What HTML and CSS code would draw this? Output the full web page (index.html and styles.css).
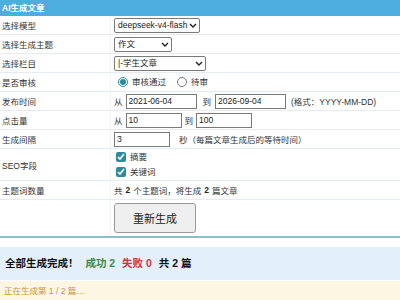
FILE: index.html
```html
<!DOCTYPE html>
<html lang="zh-CN">
<head>
<meta charset="UTF-8">
<meta name="viewport" content="width=device-width, initial-scale=1.0">
<title>AI生成文章</title>
<link rel="stylesheet" href="styles.css">
</head>
<body>
    <div class="panel">
        <div class="panel-title">AI生成文章</div>
        <div class="form-table">
            <div class="row">
                <div class="label">选择模型</div>
                <div class="value">
                    <span class="select-wrap">
                        <select class="sel-model"><option>deepseek-v4-flash</option></select>
                        <svg class="chev" width="8" height="5" viewBox="0 0 8 5"><path d="M1 1l3 3 3-3" fill="none" stroke="#222" stroke-width="1.4"/></svg>
                    </span>
                </div>
            </div>
            <div class="row">
                <div class="label">选择生成主题</div>
                <div class="value">
                    <span class="select-wrap">
                        <select class="sel-topic"><option>作文</option></select>
                        <svg class="chev" width="8" height="5" viewBox="0 0 8 5"><path d="M1 1l3 3 3-3" fill="none" stroke="#222" stroke-width="1.4"/></svg>
                    </span>
                </div>
            </div>
            <div class="row">
                <div class="label">选择栏目</div>
                <div class="value">
                    <span class="select-wrap">
                        <select class="sel-column"><option>|-学生文章</option></select>
                        <svg class="chev" width="8" height="5" viewBox="0 0 8 5"><path d="M1 1l3 3 3-3" fill="none" stroke="#222" stroke-width="1.4"/></svg>
                    </span>
                </div>
            </div>
            <div class="row">
                <div class="label">是否审核</div>
                <div class="value">
                    <label class="opt"><input type="radio" name="check" checked> 审核通过</label>
                    <label class="opt"><input type="radio" name="check"> 待审</label>
                </div>
            </div>
            <div class="row">
                <div class="label">发布时间</div>
                <div class="value">
                    <span>从</span>
                    <input type="text" class="txt-date" value="2021-06-04">
                    <span class="word">到</span>
                    <input type="text" class="txt-date" value="2026-09-04">
                    <span class="hint">(格式：YYYY-MM-DD)</span>
                </div>
            </div>
            <div class="row">
                <div class="label">点击量</div>
                <div class="value">
                    <span>从</span>
                    <input type="text" class="txt-num" value="10">
                    <span>到</span>
                    <input type="text" class="txt-num" value="100">
                </div>
            </div>
            <div class="row">
                <div class="label">生成间隔</div>
                <div class="value">
                    <input type="text" class="txt-num" value="3">
                    <span class="hint gap">秒（每篇文章生成后的等待时间）</span>
                </div>
            </div>
            <div class="row row-seo">
                <div class="label">SEO字段</div>
                <div class="value value-col">
                    <label class="opt"><input type="checkbox" checked> 摘要</label>
                    <label class="opt"><input type="checkbox" checked> 关键词</label>
                </div>
            </div>
            <div class="row">
                <div class="label">主题词数量</div>
                <div class="value">
                    共 <b>2</b> 个主题词，将生成 <b>2</b> 篇文章
                </div>
            </div>
            <div class="row row-btn">
                <div class="label"></div>
                <div class="value">
                    <button type="button" class="btn">重新生成</button>
                </div>
            </div>
        </div>
    </div>

    <div class="status-done">
        全部生成完成！ <span class="ok">成功 2</span> <span class="fail">失败 0</span> 共 2 篇
    </div>
    <div class="status-progress">正在生成第 1 / 2 篇…</div>
</body>
</html>
```

FILE: styles.css
```css
body {
    margin: 0;
    padding: 0;
    font-family: "Liberation Sans", "Noto Sans CJK SC", sans-serif;
    font-size: 8.5px;
    color: #333;
    background-color: #ffffff;
}
.panel {
    border-bottom: 2px solid #8fbccb;
}
.panel-title {
    height: 16px;
    line-height: 16px;
    padding-left: 2px;
    background-color: #4caddf;
    color: #ffffff;
    font-weight: bold;
}
.row {
    display: flex;
    height: 18px;
    border-bottom: 1px solid #e4ecef;
}
.row-seo {
    height: 31px;
}
.row-btn {
    height: 36px;
    border-bottom: none;
}
.label {
    width: 108px;
    padding-left: 2px;
    display: flex;
    align-items: center;
    border-right: 1px solid #f2f4f5;
}
.value {
    flex: 1;
    display: flex;
    align-items: center;
    padding-left: 3px;
    gap: 3px;
}
.value-col {
    flex-direction: column;
    align-items: flex-start;
    justify-content: center;
    gap: 3px;
    padding-left: 5px;
}
b {
    color: #222;
}
select, input[type="text"] {
    font-family: inherit;
    font-size: 8.5px;
    color: #222;
    height: 15px;
    box-sizing: border-box;
    border: 1px solid #7a7a7a;
    background-color: #ffffff;
    padding: 0 2px;
    margin: 0;
}
.select-wrap {
    position: relative;
    display: inline-flex;
}
select {
    appearance: none;
    -webkit-appearance: none;
    border-radius: 2px;
    padding: 0 11px 0 3px;
}
.chev {
    position: absolute;
    right: 3px;
    top: 5px;
    pointer-events: none;
}
.sel-model {
    width: 86px;
}
.sel-topic {
    width: 58px;
}
.sel-column {
    width: 92px;
}
.txt-date {
    width: 71px;
}
.txt-num {
    width: 56px;
}
.word {
    margin-left: 3px;
    margin-right: 1px;
}
.hint {
    margin-left: 2px;
}
.gap {
    margin-left: 6px;
}
.opt {
    display: flex;
    align-items: center;
    gap: 4px;
    margin-right: 8px;
    line-height: 12px;
}
.opt:first-child {
    margin-left: 4px;
}
.value-col .opt:first-child {
    margin-left: 0;
}
input[type="radio"], input[type="checkbox"] {
    width: 10px;
    height: 10px;
    margin: 0;
    accent-color: #2a8c9c;
}
.btn {
    width: 82px;
    height: 30px;
    font-family: inherit;
    font-size: 11px;
    color: #222;
    background-color: #efefef;
    border: 1px solid #9a9a9a;
    border-radius: 3px;
    cursor: pointer;
}
.status-done {
    margin-top: 9px;
    height: 33px;
    line-height: 33px;
    padding-left: 5px;
    background-color: #e3effb;
    color: #111;
    font-size: 10.5px;
    font-weight: bold;
}
.ok {
    color: #3d8a44;
    margin-left: 4px;
}
.fail {
    color: #c8343a;
    margin-left: 4px;
    margin-right: 4px;
}
.status-progress {
    margin-top: 1px;
    height: 20px;
    line-height: 20px;
    padding-left: 4px;
    background-color: #fdf6e2;
    color: #c99540;
}
```
